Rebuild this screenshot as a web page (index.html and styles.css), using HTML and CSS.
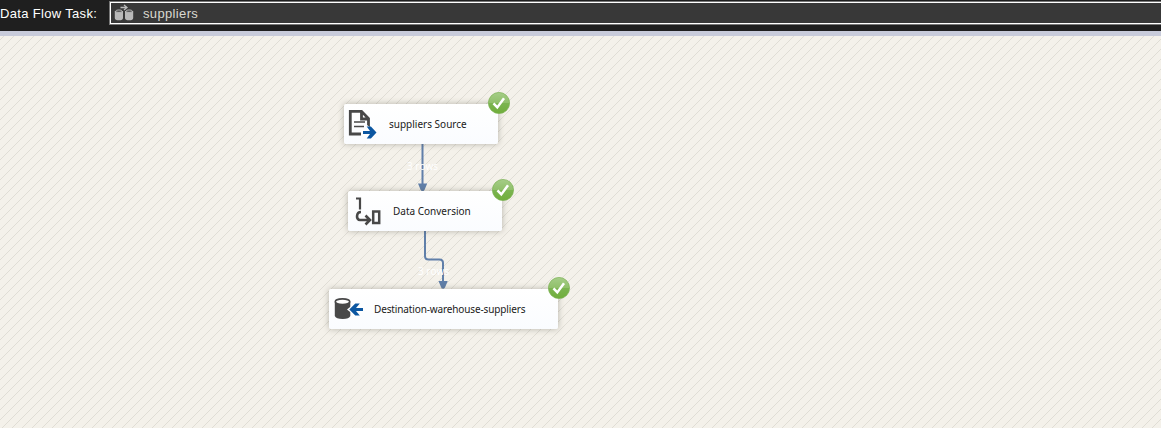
FILE: index.html
```html
<!DOCTYPE html>
<html lang="en">
<head>
<meta charset="utf-8">
<title>Data Flow Task</title>
<link rel="stylesheet" href="styles.css">
</head>
<body>
<svg width="0" height="0" class="defs">
  <defs>
    <linearGradient id="green" x1="0" y1="0" x2="0" y2="1"><stop offset="0" stop-color="#a5cd87"/><stop offset=".48" stop-color="#91c06b"/><stop offset=".52" stop-color="#7bb450"/><stop offset="1" stop-color="#70ae3a"/></linearGradient>
    <symbol id="check" viewBox="0 0 22 22"><circle cx="11" cy="11" r="10.6" fill="url(#green)" stroke="#7cb255" stroke-width=".7"/><path d="M5.5 11.300 9.300 15.400 16 6.200" fill="none" stroke="#fff" stroke-width="2.500"/></symbol>
  </defs>
</svg>
<header class="toolbar">
  <span class="label">Data Flow Task:</span>
  <div class="selector">
    <svg class="task-icon" viewBox="0 0 20 18" width="20" height="18">
      <path d="M.8 7v7q0 2.300 4.100 2.300T9 14V7zM11 7v7q0 2.300 4.100 2.300t4.100-2.300V7z" fill="#b8b8b8"/>
      <ellipse cx="4.900" cy="7.200" rx="3.200" ry="1.300" fill="#555" stroke="#c4c4c4" stroke-width=".8"/>
      <ellipse cx="15.100" cy="7.200" rx="3.200" ry="1.300" fill="#555" stroke="#c4c4c4" stroke-width=".8"/>
      <path d="M6.500 3.500H12M10 1l3 2.500-3 2.500" fill="none" stroke="#b8b8b8" stroke-width="1.300"/>
    </svg>
    <span class="selected">suppliers</span>
  </div>
</header>
<main class="canvas">
  <svg class="links" width="1161" height="392" viewBox="0 36 1161 392">
    <path d="M422.500 144v42M425 231v25q0 3.500 3.500 3.500h11q3.500 0 3.500 3.500v20" fill="none" stroke="#607fa9" stroke-width="2"/>
    <path d="M418 183.500h9.200l-2.700 6.500q-1.900 2.500-3.800 0zM438.500 281h9.200l-2.700 6.500q-1.900 2.500-3.800 0z" fill="#607fa9"/>
  </svg>
  <span class="rows rows-1">3 rows</span>
  <span class="rows rows-2">3 rows</span>
  <div class="node source">
    <svg class="node-icon" width="30" height="30" viewBox="0 0 30 30">
      <path d="M15 25H2.300V2.300H13.500L20.500 9.500V18M13.500 3v7H21" fill="none" stroke="#484848" stroke-width="2.800"/>
      <path d="M6 13h11M6 17.500h10" stroke="#484848" stroke-width="1.700"/>
      <path d="M13 20h6v-4l10 7.500L19 31v-4h-6z" fill="#fff"/>
      <path d="M15 22h7l-3.300-4.500h4.200l5.600 6-5.600 6h-4.200L22 25h-7z" fill="#0b56a1"/>
    </svg>
    <span class="name">suppliers Source</span>
    <svg class="badge" width="22" height="22"><use href="#check"/></svg>
  </div>
  <div class="node conversion">
    <svg class="node-icon" width="30" height="30" viewBox="0 0 30 30">
      <path d="M4 2.500H8V13.500" fill="none" stroke="#484848" stroke-width="2.200"/>
      <path d="M9 16C4 16 3.800 24 8 24h9M13.500 19.500l4.500 4.500-4.500 4.500" fill="none" stroke="#484848" stroke-width="2.600"/>
      <rect x="21.200" y="15.500" width="6" height="11.500" fill="none" stroke="#484848" stroke-width="2.500"/>
    </svg>
    <span class="name">Data Conversion</span>
    <svg class="badge" width="22" height="22"><use href="#check"/></svg>
  </div>
  <div class="node destination">
    <svg class="node-icon" width="30" height="30" viewBox="0 0 30 30">
      <path d="M.8 7.500v14.500q1 3 8 3 6.500 0 7.500-3V7.500z" fill="#484848"/>
      <ellipse cx="8.500" cy="7.700" rx="7.200" ry="2.800" fill="#fff" stroke="#484848" stroke-width="1.600"/>
      <path d="M29 12.500h-6v-5l-10 8 10 8v-5h6z" fill="#fff"/>
      <path d="M29 14h-7l3.800-4.500h-4.500l-6 6 6 6h4.500L22 17h7z" fill="#0b56a1"/>
    </svg>
    <span class="name">Destination-warehouse-suppliers</span>
    <svg class="badge" width="22" height="22"><use href="#check"/></svg>
  </div>
</main>
</body>
</html>
```
FILE: styles.css
```css
* { box-sizing: border-box; }
body {
  margin: 0;
  height: 428px;
  overflow: hidden;
  display: flex;
  flex-direction: column;
  font-family: "Liberation Sans", Arial, sans-serif;
}
.defs { position: absolute; }
.toolbar {
  display: flex;
  align-items: flex-start;
  height: 36px;
  padding-top: 2px;
  background: #1f1f1f;
  border-bottom: 5px solid #c8cbda;
}
.label {
  width: 110px;
  line-height: 23px;
  font-size: 13px;
  letter-spacing: .33px;
  color: #fff;
  white-space: nowrap;
}
.selector {
  flex: 1;
  display: flex;
  align-items: center;
  height: 22px;
  padding-left: 3px;
  background: #383838;
  border: 1px solid #fff;
  border-right: 0;
  outline: 1px solid #777;
}
.task-icon { margin-top: -1px; }
.selected {
  margin-left: 9px;
  font-size: 13px;
  letter-spacing: .35px;
  color: #d8d8d0;
}
.canvas {
  position: relative;
  flex: 1;
  background-color: #f4f1ea;
  background-image: linear-gradient(135deg, transparent 17%, #e0ddd5 20%, transparent 23%, transparent 67%, #e0ddd5 70%, transparent 73%);
  background-size: 10px 10px;
}
.links { position: absolute; left: 0; top: 0; }
.node {
  position: absolute;
  display: flex;
  align-items: center;
  height: 40px;
  border-radius: 2px;
  background: linear-gradient(#fff, #fafcff);
  box-shadow: 0 0 6px rgba(80, 75, 60, .38);
}
.source { left: 344px; top: 68px; width: 154px; padding-left: 4px; }
.conversion { left: 348px; top: 155px; width: 154px; padding-left: 4px; }
.destination { left: 329px; top: 253px; width: 229px; padding-left: 5px; }
.node-icon { flex: none; }
.name {
  margin-left: 11px;
  font-family: "Noto Sans", sans-serif;
  font-size: 10px;
  line-height: 14px;
  color: #202020;
  white-space: nowrap;
}
.destination .name { margin-left: 10px; letter-spacing: -.13px; }
.badge { position: absolute; right: -12px; top: -12px; }
.rows {
  position: absolute;
  font: 10px/12px "Open Sans", sans-serif;
  color: #fff;
  white-space: nowrap;
}
.rows-1 { left: 407px; top: 124px; }
.rows-2 { left: 418px; top: 229px; }
```
